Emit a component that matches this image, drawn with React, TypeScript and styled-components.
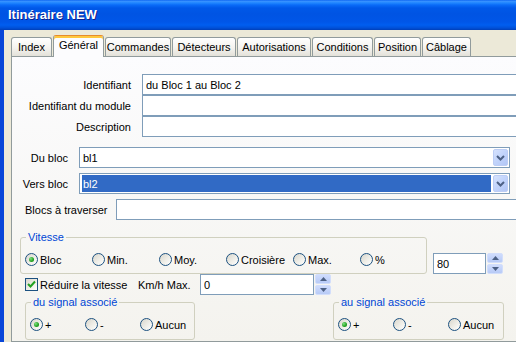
import React from 'react';
import styled, { createGlobalStyle, css } from 'styled-components';

const GlobalStyle = createGlobalStyle`
  html, body {
    margin: 0;
    padding: 0;
    background: #ECE9D8;
    overflow: hidden;
  }
  body {
    font-family: "Liberation Sans", Arial, sans-serif;
    font-size: 11px;
    color: #000;
  }
  * {
    box-sizing: border-box;
  }
`;

const Window = styled.div`
  width: 516px;
  height: 342px;
  display: flex;
  flex-direction: column;
  overflow: hidden;
`;

const TitleBar = styled.div`
  height: 30px;
  flex: none;
  display: flex;
  align-items: center;
  padding: 0 0 1px 8px;
  background: linear-gradient(
    to bottom,
    #0058ee 0px,
    #3d95ff 1px,
    #1f86ff 3px,
    #0a6bf8 5px,
    #0058e8 8px,
    #0054e3 14px,
    #0056e8 22px,
    #005ef0 25px,
    #0050d8 28px,
    #003fb8 30px
  );
  color: #fff;
  font-size: 13px;
  font-weight: bold;
  text-shadow: 1px 1px 0 #0f1e89;
`;

const Frame = styled.div`
  flex: 1;
  min-height: 0;
  display: flex;
  flex-direction: column;
  background: #ece9d8;
  border-left: 4px solid #0846d8;
  padding: 5px 0 0 7px;
`;

const TabStrip = styled.div`
  display: flex;
  align-items: flex-end;
  gap: 1px;
  height: 21px;
  flex: none;
  position: relative;
  z-index: 1;
`;

const Tab = styled.div<{ $w: number; $active?: boolean }>`
  width: ${p => p.$w}px;
  height: 19px;
  flex: none;
  display: flex;
  align-items: center;
  justify-content: center;
  border: 1px solid #919b9c;
  border-bottom: none;
  border-radius: 3px 3px 0 0;
  background: linear-gradient(#ffffff, #f4f3ef 55%, #e3e1d9);
  white-space: nowrap;
  ${p =>
    p.$active &&
    css`
      height: 22px;
      margin-bottom: -1px;
      padding-bottom: 3px;
      background: #fcfcfe;
      border-top: 1px solid #e68b2c;
      box-shadow: inset 0 2px 0 #ffc83c;
    `}
`;

const Panel = styled.div`
  flex: 1;
  margin-right: -10px;
  border: 1px solid #919b9c;
  background: linear-gradient(#fcfcfe, #f4f3ee);
  display: flex;
  flex-direction: column;
`;

const IdGrid = styled.div`
  margin-top: 17px;
  display: grid;
  grid-template-columns: 119px 1fr;
  grid-auto-rows: 21px;
  column-gap: 11px;
`;

const RightLabel = styled.label`
  display: flex;
  align-items: center;
  justify-content: flex-end;
  white-space: nowrap;
`;

const TextBox = styled.input<{ $w?: number }>`
  height: 21px;
  width: ${p => (p.$w ? `${p.$w}px` : '100%')};
  flex: ${p => (p.$w ? 'none' : '1')};
  min-width: 0;
  margin: 0;
  border: 1px solid #7f9db9;
  border-radius: 0;
  padding: 0 3px;
  background: #fff;
  font: inherit;
  color: #000;
  outline: none;
`;

const SelectGrid = styled.div`
  margin-top: 10px;
  display: grid;
  grid-template-columns: 56px 431px;
  grid-auto-rows: 21px;
  column-gap: 11px;
  row-gap: 5px;
`;

const Select = styled.div`
  height: 21px;
  display: flex;
  align-items: stretch;
  border: 1px solid #7f9db9;
  background: #fff;
  padding: 1px 1px 1px 2px;
`;

const SelectValue = styled.div<{ $selected?: boolean }>`
  flex: 1;
  display: flex;
  align-items: center;
  padding-left: 1px;
  margin-right: 2px;
  ${p =>
    p.$selected &&
    css`
      background: #316ac5;
      color: #fff;
    `}
`;

const DropButton = styled.div`
  width: 15px;
  flex: none;
  display: flex;
  align-items: center;
  justify-content: center;
  border: 1px solid #bccdf5;
  border-radius: 2px;
  background: linear-gradient(135deg, #d6e2fd, #c1d3fb 50%, #b2c6f5);
`;

const TraverseRow = styled.div`
  margin-top: 5px;
  padding-left: 13px;
  display: flex;
  align-items: center;
  height: 21px;
`;

const PlainLabel = styled.label<{ $w: number }>`
  width: ${p => p.$w}px;
  flex: none;
  white-space: nowrap;
`;

const VitesseRow = styled.div`
  margin-top: 11px;
  padding-left: 8px;
  display: flex;
  align-items: flex-end;
  gap: 6px;
`;

const GroupBox = styled.fieldset<{ $w: number; $pb: number }>`
  width: ${p => p.$w}px;
  flex: none;
  margin: 0;
  padding: 0 0 ${p => p.$pb}px 4px;
  border: 1px solid #d0d0bf;
  border-radius: 3px;
  min-width: 0;
`;

const Legend = styled.legend`
  color: #0046d5;
  padding: 0 2px;
  margin-left: 1px;
  line-height: 13px;
  font-size: 11px;
`;

const RadioRow = styled.div`
  display: flex;
  align-items: center;
  padding-top: 9px;
  height: 22px;
`;

const RadioItem = styled.label<{ $w: number }>`
  width: ${p => p.$w}px;
  flex: none;
  display: flex;
  align-items: center;
  gap: 2px;
  white-space: nowrap;
`;

const RadioCircle = styled.span<{ $on?: boolean }>`
  width: 13px;
  height: 13px;
  flex: none;
  border-radius: 50%;
  border: 1px solid #1c5180;
  background: linear-gradient(135deg, #d8d6cc 0%, #efeee8 55%, #ffffff 100%);
  position: relative;
  ${p =>
    p.$on &&
    css`
      &::after {
        content: '';
        position: absolute;
        left: 3px;
        top: 3px;
        width: 5px;
        height: 5px;
        border-radius: 50%;
        background: radial-gradient(circle at 35% 35%, #7fe07f, #21a121 60%, #168016);
      }
    `}
`;

const SpinField = styled.div`
  display: flex;
  align-items: stretch;
  gap: 1px;
`;

const SpinButtons = styled.div`
  width: 16px;
  height: 21px;
  display: flex;
  flex-direction: column;
  gap: 1px;
`;

const SpinButton = styled.div`
  flex: 1;
  display: flex;
  align-items: center;
  justify-content: center;
  border: 1px solid #d2defb;
  border-radius: 2px;
  background: linear-gradient(#cfdcfd, #b7caf6);
`;

const CheckRow = styled.div`
  padding-left: 13px;
  height: 21px;
  display: flex;
  align-items: center;
`;

const CheckItem = styled.label`
  width: 113px;
  flex: none;
  display: flex;
  align-items: center;
  gap: 2px;
  white-space: nowrap;
`;

const CheckBox = styled.span`
  width: 13px;
  height: 13px;
  flex: none;
  border: 1px solid #1c5180;
  background: linear-gradient(135deg, #d8d6cc 0%, #efeee8 55%, #ffffff 100%);
  display: flex;
  align-items: center;
  justify-content: center;
`;

const SignalRow = styled.div`
  margin-top: 1px;
  padding-left: 13px;
  display: flex;
  gap: 138px;
`;

const Chevron = () => (
  <svg width="9" height="6" viewBox="0 0 9 6">
    <path d="M1 1 L4.5 4.5 L8 1" fill="none" stroke="#4d6185" strokeWidth="2" />
  </svg>
);

const Arrow = ({ up }: { up?: boolean }) => (
  <svg width="7" height="4" viewBox="0 0 7 4">
    <path d={up ? 'M0 4 L3.5 0 L7 4 Z' : 'M0 0 L3.5 4 L7 0 Z'} fill="#4d6185" />
  </svg>
);

const Spin = () => (
  <SpinButtons>
    <SpinButton>
      <Arrow up />
    </SpinButton>
    <SpinButton>
      <Arrow />
    </SpinButton>
  </SpinButtons>
);

const Radio = ({ label, w, on }: { label: string; w: number; on?: boolean }) => (
  <RadioItem $w={w}>
    <RadioCircle $on={on} />
    {label}
  </RadioItem>
);

const tabs = [
  { label: 'Index', w: 41 },
  { label: 'Général', w: 51, active: true },
  { label: 'Commandes', w: 66 },
  { label: 'Détecteurs', w: 64 },
  { label: 'Autorisations', w: 74 },
  { label: 'Conditions', w: 61 },
  { label: 'Position', w: 47 },
  { label: 'Câblage', w: 49 },
];

const speeds = ['Bloc', 'Min.', 'Moy.', 'Croisière', 'Max.', '%'];

export default function App() {
  return (
    <>
      <GlobalStyle />
      <Window>
        <TitleBar>Itinéraire NEW</TitleBar>
        <Frame>
          <TabStrip>
            {tabs.map(t => (
              <Tab key={t.label} $w={t.w} $active={t.active}>
                {t.label}
              </Tab>
            ))}
          </TabStrip>
          <Panel>
            <IdGrid>
              <RightLabel>Identifiant</RightLabel>
              <TextBox readOnly defaultValue="du Bloc 1 au Bloc 2" />
              <RightLabel>Identifiant du module</RightLabel>
              <TextBox readOnly defaultValue="" />
              <RightLabel>Description</RightLabel>
              <TextBox readOnly defaultValue="" />
            </IdGrid>

            <SelectGrid>
              <RightLabel>Du bloc</RightLabel>
              <Select>
                <SelectValue>bl1</SelectValue>
                <DropButton>
                  <Chevron />
                </DropButton>
              </Select>
              <RightLabel>Vers bloc</RightLabel>
              <Select>
                <SelectValue $selected>bl2</SelectValue>
                <DropButton>
                  <Chevron />
                </DropButton>
              </Select>
            </SelectGrid>

            <TraverseRow>
              <PlainLabel $w={91}>Blocs à traverser</PlainLabel>
              <TextBox readOnly defaultValue="" />
            </TraverseRow>

            <VitesseRow>
              <GroupBox $w={407} $pb={7}>
                <Legend>Vitesse</Legend>
                <RadioRow>
                  {speeds.map((s, i) => (
                    <Radio key={s} label={s} w={67} on={i === 0} />
                  ))}
                </RadioRow>
              </GroupBox>
              <SpinField>
                <TextBox $w={53} readOnly defaultValue="80" />
                <Spin />
              </SpinField>
            </VitesseRow>

            <CheckRow>
              <CheckItem>
                <CheckBox>
                  <svg width="9" height="9" viewBox="0 0 9 9">
                    <path d="M1 4 L3.5 6.5 L8 1.5" fill="none" stroke="#21a121" strokeWidth="2" />
                  </svg>
                </CheckBox>
                Réduire la vitesse
              </CheckItem>
              <PlainLabel $w={62}>Km/h Max.</PlainLabel>
              <SpinField>
                <TextBox $w={114} readOnly defaultValue="0" />
                <Spin />
              </SpinField>
            </CheckRow>

            <SignalRow>
              <GroupBox $w={170} $pb={8}>
                <Legend>du signal associé</Legend>
                <RadioRow>
                  <Radio label="+" w={55} on />
                  <Radio label="-" w={55} />
                  <Radio label="Aucun" w={55} />
                </RadioRow>
              </GroupBox>
              <GroupBox $w={171} $pb={8}>
                <Legend>au signal associé</Legend>
                <RadioRow>
                  <Radio label="+" w={55} on />
                  <Radio label="-" w={55} />
                  <Radio label="Aucun" w={55} />
                </RadioRow>
              </GroupBox>
            </SignalRow>
          </Panel>
        </Frame>
      </Window>
    </>
  );
}
